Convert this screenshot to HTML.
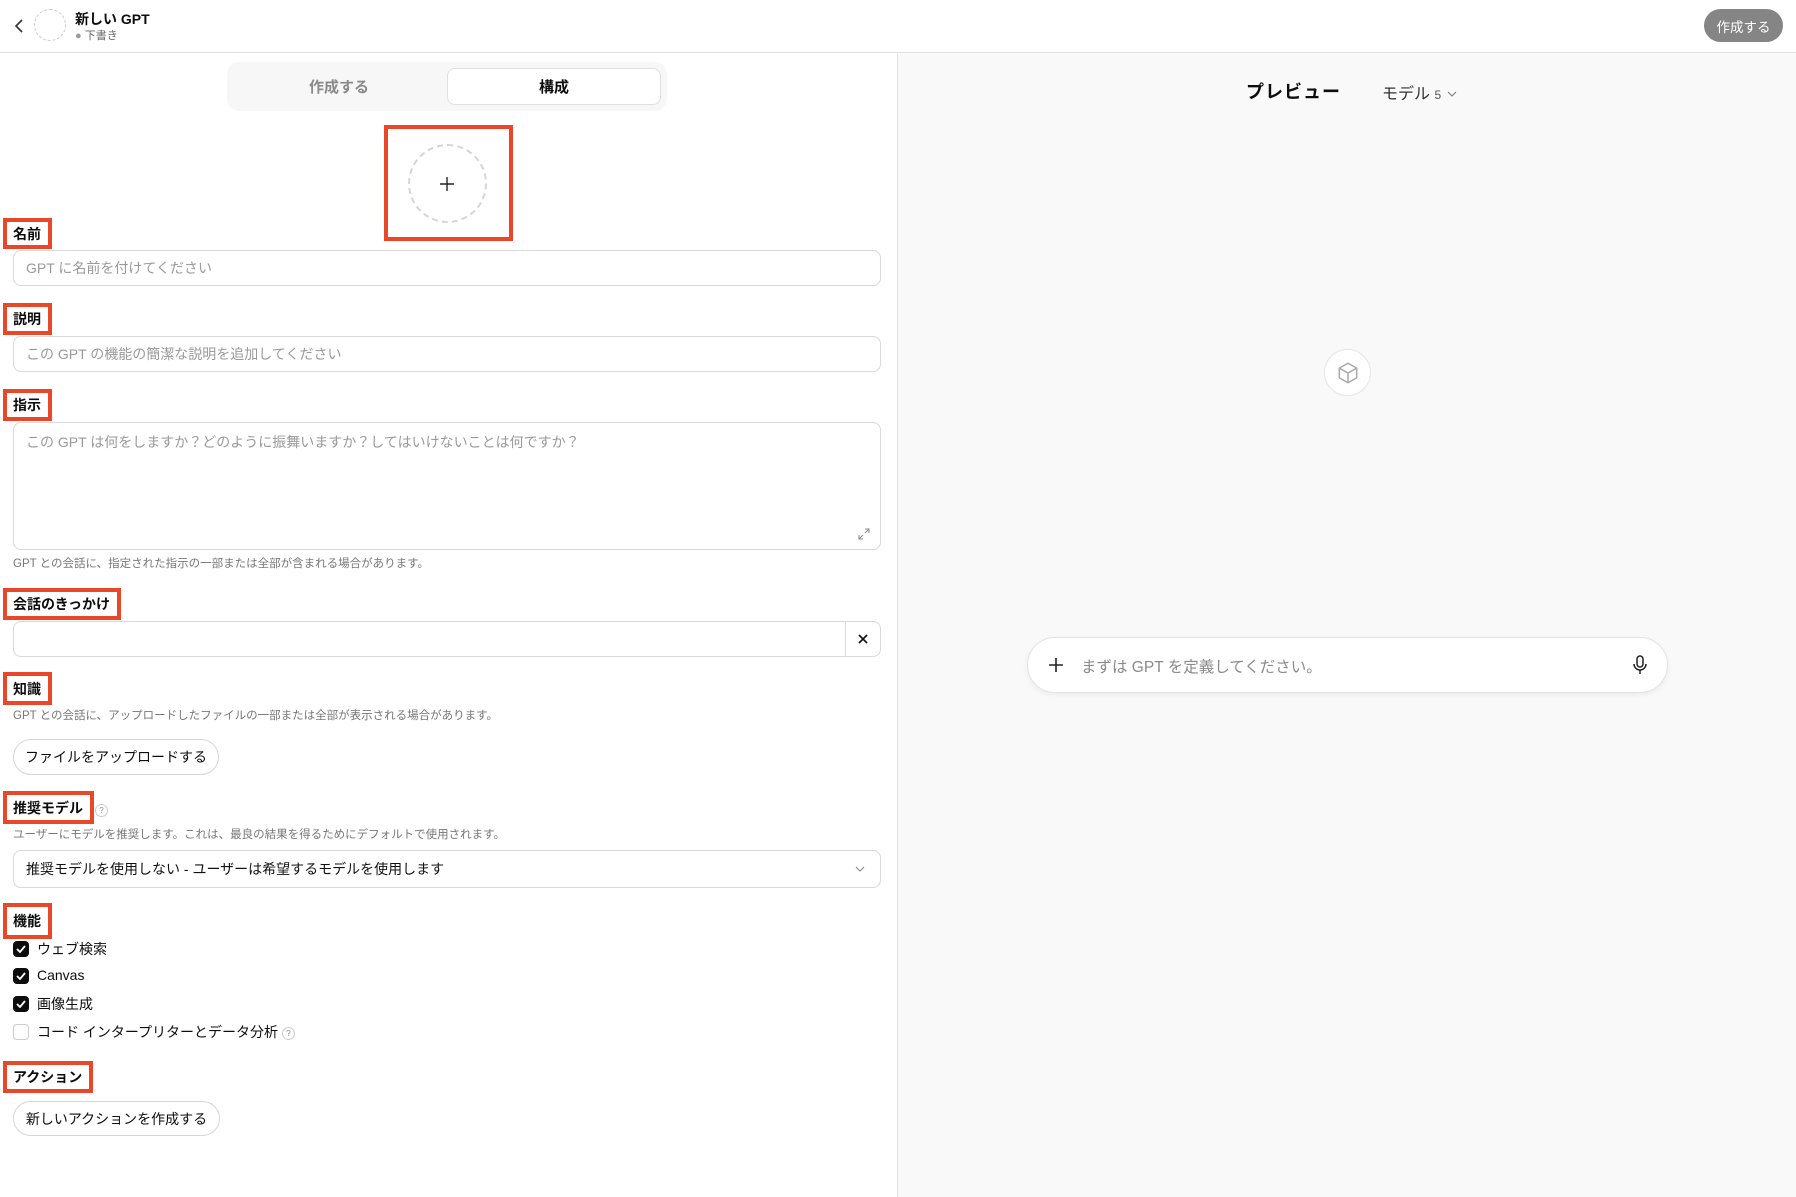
<!DOCTYPE html>
<html><head><meta charset="utf-8"><style>
*{box-sizing:border-box;margin:0;padding:0}
body{width:1796px;height:1197px;position:relative;background:#fff;font-family:"Liberation Sans","Noto Sans CJK JP",sans-serif;color:#0d0d0d;overflow:hidden}
.a{position:absolute}
.lbl{position:absolute;left:3px;border:4px solid #e8472a;background:#fff;font-weight:bold;font-size:14px;padding:0 7px 0 6px;display:flex;align-items:center}
.inp{position:absolute;left:13px;width:868px;border:1px solid #d9d9d9;border-radius:8px;background:#fff;font-size:14px;color:#9a9a9a;padding-left:12px;display:flex;align-items:center}
.hint{position:absolute;left:13px;font-size:11.5px;color:#777}
.btn{position:absolute;left:13px;border:1px solid #d6d6d6;border-radius:18px;font-size:14px;display:flex;align-items:center;justify-content:center;background:#fff}
.cb{position:absolute;left:13px;width:16px;height:16px;border-radius:4px;background:#0d0d0d;display:flex;align-items:center;justify-content:center}
.cbt{position:absolute;left:37px;font-size:14px}
.q{display:inline-block;width:13px;height:13px;border:1px solid #ccc;border-radius:50%;font-size:8px;color:#888;text-align:center;line-height:11px;vertical-align:middle}
</style></head><body>
<div class="a" style="left:0;top:0;width:1796px;height:53px;border-bottom:1px solid #dedede;background:#fff"></div>
<svg class="a" style="left:12px;top:18px" width="14" height="16"><path d="M10 2 L4 8 L10 14" stroke="#333" stroke-width="1.6" fill="none"/></svg>
<div class="a" style="left:34px;top:9px;width:32px;height:32px;border:1.5px dashed #ccc;border-radius:50%"></div>
<div class="a" style="left:75px;top:9px;font-size:14px;font-weight:bold">新しい GPT</div>
<div class="a" style="left:75px;top:27px;font-size:11px;color:#666"><span style="color:#999">●</span> 下書き</div>
<div class="a" style="left:1704px;top:9px;width:79px;height:33px;border-radius:17px;background:#858585;color:#fff;font-size:13.5px;display:flex;align-items:center;justify-content:center">作成する</div>
<div class="a" style="left:897px;top:54px;width:899px;height:1143px;background:#f9f9f9;border-left:1px solid #e3e3e3"></div>
<div class="a" style="left:1246px;top:78px;font-size:18px;font-weight:bold;letter-spacing:1px">プレビュー</div>
<div class="a" style="left:1382px;top:80px;font-size:16px;color:#333">モデル <span style="font-size:12px;color:#555">5</span> <svg width="12" height="10"><path d="M2 3 L6 7 L10 3" stroke="#777" fill="none"/></svg></div>
<div class="a" style="left:1324px;top:349px;width:47px;height:47px;border-radius:50%;background:#fff;border:1px solid #e5e5e5;display:flex;align-items:center;justify-content:center">
<svg width="26" height="26" viewBox="0 0 24 24" fill="none" stroke="#aaa" stroke-width="1.4" stroke-linejoin="round"><path d="M12 3 L20 7.5 V16.5 L12 21 L4 16.5 V7.5 Z"/><path d="M4 7.5 L12 12 L20 7.5 M12 12 V21"/></svg></div>
<div class="a" style="left:1027px;top:637px;width:641px;height:56px;border-radius:28px;background:#fff;border:1px solid #e3e3e3;box-shadow:0 2px 6px rgba(0,0,0,.06)"></div>
<svg class="a" style="left:1048px;top:657px" width="16" height="16"><path d="M8 1V15M1 8H15" stroke="#222" stroke-width="1.6"/></svg>
<div class="a" style="left:1081px;top:655px;font-size:15.5px;color:#8a8a8a">まずは GPT を定義してください。</div>
<svg class="a" style="left:1632px;top:655px" width="16" height="20" viewBox="0 0 16 20" fill="none" stroke="#222" stroke-width="1.5"><rect x="5" y="1" width="6" height="11" rx="3"/><path d="M2 9a6 6 0 0 0 12 0M8 15v4"/></svg>
<div class="a" style="left:227px;top:62px;width:440px;height:49px;border-radius:12px;background:#f7f7f7"></div>
<div class="a" style="left:447px;top:68px;width:214px;height:37px;border-radius:8px;background:#fff;border:1px solid #e0e0e0"></div>
<div class="a" style="left:227px;top:76px;width:224px;text-align:center;font-size:15px;font-weight:bold;color:#8a8a8a">作成する</div>
<div class="a" style="left:447px;top:76px;width:214px;text-align:center;font-size:15px;font-weight:bold">構成</div>
<div class="a" style="left:384px;top:125px;width:129px;height:116px;border:4px solid #e8472a"></div>
<div class="a" style="left:408px;top:144px;width:79px;height:79px;border:2px dashed #d6d6d6;border-radius:50%"></div>
<svg class="a" style="left:439px;top:176px" width="16" height="16"><path d="M8 1V15M1 8H15" stroke="#222" stroke-width="1.4"/></svg>
<div class="lbl" style="top:218px;height:31px">名前</div>
<div class="inp" style="top:250px;height:36px">GPT に名前を付けてください</div>
<div class="lbl" style="top:303px;height:32px">説明</div>
<div class="inp" style="top:336px;height:36px">この GPT の機能の簡潔な説明を追加してください</div>
<div class="lbl" style="top:389px;height:32px">指示</div>
<div class="inp" style="top:422px;height:128px;align-items:flex-start;padding-top:9px">この GPT は何をしますか？どのように振舞いますか？してはいけないことは何ですか？</div>
<svg class="a" style="left:858px;top:528px" width="12" height="12"><path d="M7 1H11V5M11 1L7 5M5 11H1V7M1 11L5 7" stroke="#888" fill="none"/></svg>
<div class="hint" style="top:555px">GPT との会話に、指定された指示の一部または全部が含まれる場合があります。</div>
<div class="lbl" style="top:588px;height:32px">会話のきっかけ</div>
<div class="inp" style="top:621px;height:36px"></div>
<div class="a" style="left:845px;top:622px;width:1px;height:34px;background:#ddd"></div>
<svg class="a" style="left:857px;top:633px" width="12" height="12"><path d="M2 2L10 10M10 2L2 10" stroke="#111" stroke-width="1.6"/></svg>
<div class="lbl" style="top:672px;height:33px">知識</div>
<div class="hint" style="top:707px">GPT との会話に、アップロードしたファイルの一部または全部が表示される場合があります。</div>
<div class="btn" style="top:739px;width:206px;height:36px">ファイルをアップロードする</div>
<div class="lbl" style="top:791px;height:33px">推奨モデル</div>
<div class="a" style="left:95px;top:802px"><span class="q">?</span></div>
<div class="hint" style="top:826px">ユーザーにモデルを推奨します。これは、最良の結果を得るためにデフォルトで使用されます。</div>
<div class="inp" style="top:850px;height:38px;color:#111">推奨モデルを使用しない - ユーザーは希望するモデルを使用します</div>
<svg class="a" style="left:854px;top:864px" width="12" height="10"><path d="M2 3L6 7L10 3" stroke="#888" fill="none"/></svg>
<div class="lbl" style="top:903px;height:36px">機能</div>
<div class="cb" style="top:941px"><svg width="10" height="8"><path d="M1 4L4 7L9 1" stroke="#fff" stroke-width="1.8" fill="none"/></svg></div>
<div class="cbt" style="top:939px">ウェブ検索</div>
<div class="cb" style="top:968px"><svg width="10" height="8"><path d="M1 4L4 7L9 1" stroke="#fff" stroke-width="1.8" fill="none"/></svg></div>
<div class="cbt" style="top:967px">Canvas</div>
<div class="cb" style="top:996px"><svg width="10" height="8"><path d="M1 4L4 7L9 1" stroke="#fff" stroke-width="1.8" fill="none"/></svg></div>
<div class="cbt" style="top:994px">画像生成</div>
<div class="cb" style="top:1024px;background:#fff;border:1px solid #ccc"></div>
<div class="cbt" style="top:1022px">コード インタープリターとデータ分析 <span class="q">?</span></div>
<div class="lbl" style="top:1061px;height:32px">アクション</div>
<div class="btn" style="top:1101px;width:207px;height:35px">新しいアクションを作成する</div>
</body></html>
